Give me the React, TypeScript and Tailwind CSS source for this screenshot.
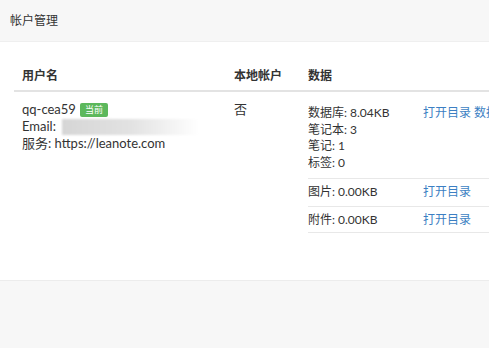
export default function App() {
  const font = { fontFamily: 'Lato, "Noto Sans CJK SC", sans-serif' };
  return (
    <div className="w-[489px] h-[348px] bg-[#f7f7f7] text-[#333] overflow-hidden" style={font}>
      <div className="h-[42px] px-[10px] flex items-center text-[12px] border-b border-[#efefef]">
        帐户管理
      </div>

      <div className="h-[239px] bg-white pt-[18px] pl-[14px] border-b border-[#ececec]">
        <table className="w-[500px] table-fixed border-collapse text-[13px] leading-[17px]">
          <thead>
            <tr className="border-b-2 border-[#e3e3e3]">
              <th className="w-[213px] h-[31px] px-[8px] text-left font-bold text-[12px]">用户名</th>
              <th className="w-[74px] px-[7px] text-left font-bold text-[12px]">本地帐户</th>
              <th className="px-[7px] text-left font-bold text-[12px]">数据</th>
            </tr>
          </thead>
          <tbody>
            <tr>
              <td className="align-top px-[8px] pt-[9px]">
                <div className="flex items-center gap-[4px]">
                  qq-cea59
                  <span className="bg-[#5cb85c] text-white text-[9px] leading-[14px] px-[5px] rounded-[2px]">当前</span>
                </div>
                <div className="flex items-center">
                  Email:
                  <span className="ml-[6px] h-[16px] w-[137px] bg-gradient-to-r from-[#d6d6d6] via-[#e2e2e2] to-white blur-[1px]"></span>
                </div>
                <div>服务: https://leanote.com</div>
              </td>
              <td className="align-top px-[7px] pt-[9px]">否</td>
              <td className="align-top pl-[7px] pt-[8px]">
                <table className="w-[200px] table-fixed border-collapse text-[12px] leading-[16.5px]">
                  <tbody>
                    <tr className="border-b border-[#e8e8e8]">
                      <td className="w-[115px] align-top pt-[5px] pb-[7px]">
                        <div>数据库: 8.04KB</div>
                        <div>笔记本: 3</div>
                        <div>笔记: 1</div>
                        <div>标签: 0</div>
                      </td>
                      <td className="align-top pt-[5px] text-[#3c7fc3] whitespace-nowrap">打开目录 数据</td>
                    </tr>
                    <tr className="border-b border-[#e8e8e8]">
                      <td className="py-[5px]">图片: 0.00KB</td>
                      <td className="py-[5px] text-[#3c7fc3]">打开目录</td>
                    </tr>
                    <tr className="border-b border-[#e8e8e8]">
                      <td className="pt-[5px] pb-[4px]">附件: 0.00KB</td>
                      <td className="pt-[5px] pb-[4px] text-[#3c7fc3]">打开目录</td>
                    </tr>
                  </tbody>
                </table>
              </td>
            </tr>
          </tbody>
        </table>
      </div>
    </div>
  );
}
